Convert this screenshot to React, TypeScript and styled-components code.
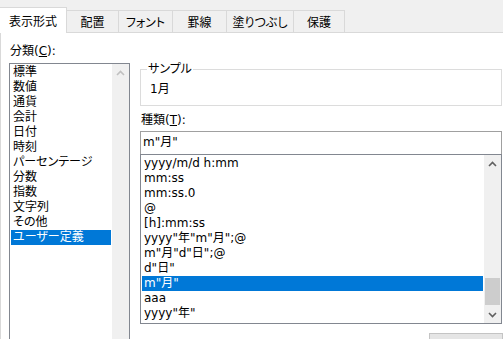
import styled, { createGlobalStyle } from "styled-components";

const GlobalStyle = createGlobalStyle`
  html, body {
    margin: 0;
    padding: 0;
    background: #ffffff;
    overflow: hidden;
  }
  body {
    font-family: "DejaVu Sans", "Noto Sans CJK JP", sans-serif;
    font-size: 12px;
    font-feature-settings: "palt";
    color: #000000;
  }
`;

const Page = styled.div`
  width: 503px;
  height: 339px;
  overflow: hidden;
  background: #ffffff;
  display: flex;
  flex-direction: column;
`;

const TabStrip = styled.div`
  height: 33px;
  flex: none;
  box-sizing: border-box;
  background: #f0f0f0;
  border-bottom: 1px solid #d9d9d9;
  display: flex;
  align-items: flex-end;
`;

const Tab = styled.div<{ $active?: boolean; $width: number }>`
  box-sizing: border-box;
  flex: none;
  width: ${(p) => p.$width}px;
  height: ${(p) => (p.$active ? 26 : 23)}px;
  margin-bottom: -1px;
  margin-left: -1px;
  background: ${(p) => (p.$active ? "#ffffff" : "#f0f0f0")};
  border: 1px solid #d9d9d9;
  border-bottom: ${(p) => (p.$active ? "none" : "1px solid #d9d9d9")};
  position: ${(p) => (p.$active ? "relative" : "static")};
  z-index: ${(p) => (p.$active ? 1 : 0)};
  display: flex;
  align-items: center;
  justify-content: center;
  padding-bottom: ${(p) => (p.$active ? 1 : 0)}px;
  &:first-child {
    margin-left: 0;
    border-left: none;
  }
`;

const Body = styled.div`
  flex: 1;
  display: flex;
  align-items: flex-start;
  border-left: 1px solid #d9d9d9;
  padding: 11px 0 0 8px;
  gap: 10px;
  min-height: 0;
  overflow: hidden;
`;

const LeftColumn = styled.div`
  width: 121px;
  flex: none;
  display: flex;
  flex-direction: column;
`;

const Label = styled.div`
  flex: none;
  height: 19px;
  line-height: 14px;
  padding-left: 1px;
`;

const Key = styled.span`
  text-decoration: underline;
  text-underline-offset: 1px;
`;

const ListBox = styled.div<{ $height: number }>`
  box-sizing: border-box;
  height: ${(p) => p.$height}px;
  border: 1px solid #828790;
  display: flex;
  background: #ffffff;
  flex: none;
`;

const Items = styled.div`
  flex: 1;
  padding: 1px 1px 0 1px;
  display: flex;
  flex-direction: column;
  min-width: 0;
`;

const Item = styled.div<{ $selected?: boolean }>`
  flex: none;
  height: 15px;
  line-height: 15px;
  padding-left: 2px;
  white-space: nowrap;
  background: ${(p) => (p.$selected ? "#0078d7" : "transparent")};
  color: ${(p) => (p.$selected ? "#ffffff" : "#000000")};
`;

const ScrollBar = styled.div`
  width: 17px;
  flex: none;
  background: #f0f0f0;
  display: flex;
  flex-direction: column;
`;

const Arrow = styled.div`
  height: 17px;
  display: flex;
  align-items: center;
  justify-content: center;
  flex: none;
`;

const Track = styled.div`
  flex: 1;
  display: flex;
  flex-direction: column;
`;

const Thumb = styled.div<{ $top: number; $size: number }>`
  flex: none;
  margin-top: ${(p) => p.$top}px;
  height: ${(p) => p.$size}px;
  margin-left: 1px;
  margin-right: 1px;
  background: #cdcdcd;
`;

const RightColumn = styled.div`
  flex: 1;
  display: flex;
  flex-direction: column;
  padding-right: 1px;
  min-width: 0;
`;

const GroupBox = styled.fieldset`
  box-sizing: border-box;
  flex: none;
  margin: 18px 0 0 0;
  padding: 6px 0 0 9px;
  height: 44px;
  border: 1px solid #dcdcdc;
  display: flex;
  align-items: center;
  legend {
    padding: 0 1px;
    margin-left: -3px;
    line-height: 14px;
  }
`;

const Sample = styled.div`
  line-height: 14px;
`;

const TypeLabel = styled(Label)`
  margin-top: 7px;
  height: 18px;
`;

const TextInput = styled.div`
  box-sizing: border-box;
  height: 23px;
  border: 1px solid #a0a0a0;
  border-bottom: none;
  padding-left: 2px;
  line-height: 21px;
  flex: none;
`;

const Footer = styled.div`
  flex: none;
  display: flex;
  justify-content: flex-end;
  margin-top: 9px;
  margin-right: -1px;
`;

const Button = styled.div`
  box-sizing: border-box;
  width: 74px;
  height: 24px;
  border: 1px solid #c4c4c4;
  background: #e5e5e5;
`;

function Chevron({ up, color }: { up?: boolean; color: string }) {
  return (
    <svg width="9" height="6" viewBox="0 0 9 6">
      <polyline
        points={up ? "1,5 4.5,1.5 8,5" : "1,1 4.5,4.5 8,1"}
        fill="none"
        stroke={color}
        strokeWidth="1.6"
      />
    </svg>
  );
}

const tabs = [
  { label: "表示形式", width: 67, active: true },
  { label: "配置", width: 53 },
  { label: "フォント", width: 55 },
  { label: "罫線", width: 55 },
  { label: "塗りつぶし", width: 68 },
  { label: "保護", width: 52 },
];

const categories = [
  "標準",
  "数値",
  "通貨",
  "会計",
  "日付",
  "時刻",
  "パーセンテージ",
  "分数",
  "指数",
  "文字列",
  "その他",
  "ユーザー定義",
];

const formats = [
  "yyyy/m/d h:mm",
  "mm:ss",
  "mm:ss.0",
  "@",
  "[h]:mm:ss",
  'yyyy"年"m"月";@',
  'm"月"d"日";@',
  'd"日"',
  'm"月"',
  "aaa",
  'yyyy"年"',
];

export default function App() {
  return (
    <>
      <GlobalStyle />
      <Page>
        <TabStrip>
          {tabs.map((t) => (
            <Tab key={t.label} $active={t.active} $width={t.width}>
              {t.label}
            </Tab>
          ))}
        </TabStrip>
        <Body>
          <LeftColumn>
            <Label>
              分類(<Key>C</Key>):
            </Label>
            <ListBox $height={300}>
              <Items>
                {categories.map((c) => (
                  <Item key={c} $selected={c === "ユーザー定義"}>
                    {c}
                  </Item>
                ))}
              </Items>
              <ScrollBar>
                <Arrow>
                  <Chevron up color="#c0c0c0" />
                </Arrow>
              </ScrollBar>
            </ListBox>
          </LeftColumn>
          <RightColumn>
            <GroupBox>
              <legend>サンプル</legend>
              <Sample>1月</Sample>
            </GroupBox>
            <TypeLabel>
              種類(<Key>T</Key>):
            </TypeLabel>
            <TextInput>m"月"</TextInput>
            <ListBox $height={170}>
              <Items>
                {formats.map((f) => (
                  <Item key={f} $selected={f === 'm"月"'}>
                    {f}
                  </Item>
                ))}
              </Items>
              <ScrollBar>
                <Arrow>
                  <Chevron up color="#606060" />
                </Arrow>
                <Track>
                  <Thumb $top={106} $size={27} />
                </Track>
                <Arrow>
                  <Chevron color="#606060" />
                </Arrow>
              </ScrollBar>
            </ListBox>
            <Footer>
              <Button />
            </Footer>
          </RightColumn>
        </Body>
      </Page>
    </>
  );
}
